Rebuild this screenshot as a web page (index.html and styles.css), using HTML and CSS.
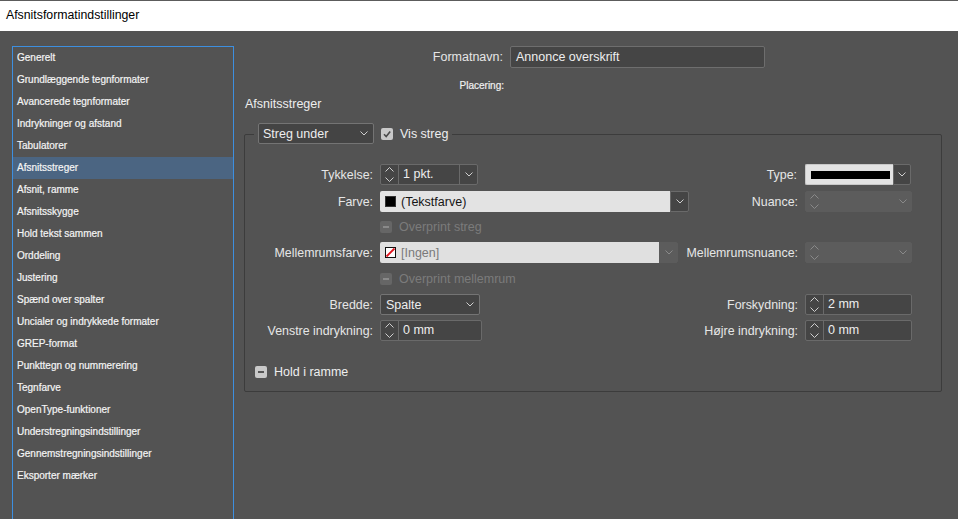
FILE: index.html
```html
<!DOCTYPE html>
<html lang="da">
<head>
<meta charset="utf-8">
<title>Afsnitsformatindstillinger</title>
<link rel="stylesheet" href="styles.css">
</head>
<body>
<header class="titlebar">Afsnitsformatindstillinger</header>
<div class="dialog">
  <nav class="sidebar">
    <ul class="nav">
      <li>Generelt</li>
      <li>Grundlæggende tegnformater</li>
      <li>Avancerede tegnformater</li>
      <li>Indrykninger og afstand</li>
      <li>Tabulatorer</li>
      <li class="active">Afsnitsstreger</li>
      <li>Afsnit, ramme</li>
      <li>Afsnitsskygge</li>
      <li>Hold tekst sammen</li>
      <li>Orddeling</li>
      <li>Justering</li>
      <li>Spænd over spalter</li>
      <li>Uncialer og indrykkede formater</li>
      <li>GREP-format</li>
      <li>Punkttegn og nummerering</li>
      <li>Tegnfarve</li>
      <li>OpenType-funktioner</li>
      <li>Understregningsindstillinger</li>
      <li>Gennemstregningsindstillinger</li>
      <li>Eksporter mærker</li>
    </ul>
  </nav>
  <main class="panel">
    <div class="name-row">
      <span class="name-label">Formatnavn:</span>
      <div class="name-input">Annonce overskrift</div>
    </div>
    <div class="place-row"><span class="place-label">Placering:</span></div>
    <h2 class="section">Afsnitsstreger</h2>

    <section class="group">
      <div class="legend">
        <div class="select w-streg"><span class="sel-val">Streg under</span><svg class="chev" width="8" height="5" viewBox="0 0 8 5"><path d="M.5 .5 4 4 7.5 .5"/></svg></div>
        <svg class="cb" width="12" height="12" viewBox="0 0 12 12"><rect class="cb-on" width="12" height="12" rx="2"/><path class="tick" d="M3 6.2 5.2 8.5 9.2 3.5"/></svg>
        <span class="cb-text">Vis streg</span>
      </div>

      <div class="row r1">
        <span class="lbl">Tykkelse:</span>
        <div class="spin w-tyk">
          <span class="step"><svg class="updown" width="9" height="15" viewBox="0 0 9 15"><path d="M.5 4.5 4.5 .5 8.5 4.5M.5 10.5 4.5 14.5 8.5 10.5"/></svg></span>
          <span class="val">1 pkt.</span>
          <span class="dd"><svg class="chev" width="8" height="5" viewBox="0 0 8 5"><path d="M.5 .5 4 4 7.5 .5"/></svg></span>
        </div>
        <div class="right">
          <span class="rlbl">Type:</span>
          <div class="combo type">
            <span class="field"><span class="line"></span></span>
            <span class="cdd"><svg class="chev" width="8" height="5" viewBox="0 0 8 5"><path d="M.5 .5 4 4 7.5 .5"/></svg></span>
          </div>
        </div>
      </div>

      <div class="row r2">
        <span class="lbl">Farve:</span>
        <div class="combo w-farve">
          <span class="field"><span class="sw-black"></span>(Tekstfarve)</span>
          <span class="cdd"><svg class="chev" width="8" height="5" viewBox="0 0 8 5"><path d="M.5 .5 4 4 7.5 .5"/></svg></span>
        </div>
        <div class="right">
          <span class="rlbl">Nuance:</span>
          <div class="spin off w-r">
            <span class="step"><svg class="updown" width="9" height="15" viewBox="0 0 9 15"><path d="M.5 4.5 4.5 .5 8.5 4.5M.5 10.5 4.5 14.5 8.5 10.5"/></svg></span>
            <span class="val"></span>
            <span class="dd"><svg class="chev" width="8" height="5" viewBox="0 0 8 5"><path d="M.5 .5 4 4 7.5 .5"/></svg></span>
          </div>
        </div>
      </div>

      <div class="row r3 indent">
        <svg class="cb" width="12" height="12" viewBox="0 0 12 12"><rect class="cb-off" width="12" height="12" rx="2"/><rect class="dash-off" x="3" y="5" width="6" height="2"/></svg>
        <span class="cb-text dim">Overprint streg</span>
      </div>

      <div class="row r4">
        <span class="lbl">Mellemrumsfarve:</span>
        <div class="combo w-mellem">
          <span class="field dis"><svg class="sw-none" width="11" height="11" viewBox="0 0 11 11"><rect x=".5" y=".5" width="10" height="10" fill="#fff" stroke="#111"/><path d="M1.5 9.5 9.5 1.5" stroke="#e0141e" stroke-width="1.8"/></svg>[Ingen]</span>
          <span class="cdd off"><svg class="chev" width="8" height="5" viewBox="0 0 8 5"><path d="M.5 .5 4 4 7.5 .5"/></svg></span>
        </div>
        <div class="right">
          <span class="rlbl">Mellemrumsnuance:</span>
          <div class="spin off w-r">
            <span class="step"><svg class="updown" width="9" height="15" viewBox="0 0 9 15"><path d="M.5 4.5 4.5 .5 8.5 4.5M.5 10.5 4.5 14.5 8.5 10.5"/></svg></span>
            <span class="val"></span>
            <span class="dd"><svg class="chev" width="8" height="5" viewBox="0 0 8 5"><path d="M.5 .5 4 4 7.5 .5"/></svg></span>
          </div>
        </div>
      </div>

      <div class="row r5 indent">
        <svg class="cb" width="12" height="12" viewBox="0 0 12 12"><rect class="cb-off" width="12" height="12" rx="2"/><rect class="dash-off" x="3" y="5" width="6" height="2"/></svg>
        <span class="cb-text dim">Overprint mellemrum</span>
      </div>

      <div class="row r6">
        <span class="lbl">Bredde:</span>
        <div class="select w-bredde"><span class="sel-val">Spalte</span><svg class="chev" width="8" height="5" viewBox="0 0 8 5"><path d="M.5 .5 4 4 7.5 .5"/></svg></div>
        <div class="right">
          <span class="rlbl">Forskydning:</span>
          <div class="spin w-r">
            <span class="step"><svg class="updown" width="9" height="15" viewBox="0 0 9 15"><path d="M.5 4.5 4.5 .5 8.5 4.5M.5 10.5 4.5 14.5 8.5 10.5"/></svg></span>
            <span class="val">2 mm</span>
          </div>
        </div>
      </div>

      <div class="row r7">
        <span class="lbl">Venstre indrykning:</span>
        <div class="spin w-venstre">
          <span class="step"><svg class="updown" width="9" height="15" viewBox="0 0 9 15"><path d="M.5 4.5 4.5 .5 8.5 4.5M.5 10.5 4.5 14.5 8.5 10.5"/></svg></span>
          <span class="val">0 mm</span>
        </div>
        <div class="right">
          <span class="rlbl">Højre indrykning:</span>
          <div class="spin w-r">
            <span class="step"><svg class="updown" width="9" height="15" viewBox="0 0 9 15"><path d="M.5 4.5 4.5 .5 8.5 4.5M.5 10.5 4.5 14.5 8.5 10.5"/></svg></span>
            <span class="val">0 mm</span>
          </div>
        </div>
      </div>

      <div class="row r8 hold">
        <svg class="cb" width="12" height="12" viewBox="0 0 12 12"><rect class="cb-on" width="12" height="12" rx="2"/><rect class="dash-on" x="3" y="5" width="6" height="2"/></svg>
        <span class="cb-text">Hold i ramme</span>
      </div>
    </section>
  </main>
</div>
</body>
</html>
```

FILE: styles.css
```css
* { box-sizing: border-box; }
html, body { margin: 0; height: 100%; overflow: hidden; }
body {
  background: #535353;
  font-family: "Liberation Sans", Arial, sans-serif;
  color: #e6e6e6;
}

.titlebar {
  height: 31px;
  background: #fff;
  border-top: 1px solid #5c5c5c;
  padding-left: 6px;
  font-size: 12.3px;
  line-height: 29px;
  color: #000;
}

.dialog { display: flex; height: 488px; }

.sidebar {
  flex: none;
  width: 222px;
  margin: 15px 0 0 12px;
  border: 1px solid #3d8fe0;
  border-bottom: 0;
}
.nav { list-style: none; margin: 0; padding: 0; }
.nav li {
  height: 22px;
  line-height: 22px;
  padding-left: 4px;
  font-size: 10px;
  color: #f4f4f4;
  white-space: nowrap;
  -webkit-text-stroke: 0.2px #f4f4f4;
}
.nav li.active { background: #4b6582; }

.panel { flex: 1; padding: 15px 16px 0 10px; }

.name-row { display: flex; align-items: center; height: 22px; }
.name-label { width: 259px; text-align: right; margin-right: 7px; font-size: 12.5px; }
.name-input {
  width: 255px;
  height: 22px;
  background: #454545;
  border: 1px solid #6e6e6e;
  border-radius: 2px;
  padding-left: 5px;
  font-size: 12.5px;
  line-height: 20px;
  color: #eee;
}

.place-row { margin-top: 9px; height: 14px; line-height: 14px; }
.place-label {
  display: inline-block;
  width: 260px;
  text-align: right;
  font-size: 10px;
  color: #f0f0f0;
  -webkit-text-stroke: 0.2px #f0f0f0;
}

.section {
  margin: 5px 0 0 1px;
  height: 16px;
  line-height: 16px;
  font-size: 12.5px;
  font-weight: normal;
  color: #eee;
}

.group {
  margin-top: 22px;
  border: 1px solid #3c3c3c;
  border-radius: 2px;
  padding: 0 29px 9px 0;
}

.legend {
  display: flex;
  align-items: center;
  width: max-content;
  height: 21px;
  margin: -12px 0 0 9px;
  padding: 0 4px;
  background: #535353;
}

.select {
  display: flex;
  align-items: center;
  height: 21px;
  background: #444;
  border: 1px solid #747474;
  border-radius: 2px;
  padding: 0 5px 0 4px;
  font-size: 12.5px;
  color: #eee;
}
.sel-val { flex: 1; }
.w-streg { width: 116px; margin-right: 7px; }
.w-bredde { width: 100px; padding-left: 5px; }

.chev path, .updown path { fill: none; stroke: #cfcfcf; stroke-width: 1; }

.cb { flex: none; display: block; }
.cb-on { fill: #c9c9c9; }
.cb-off { fill: #666; }
.tick { fill: none; stroke: #4a4a4a; stroke-width: 1.6; }
.dash-on { fill: #555; }
.dash-off { fill: #8a8a8a; }
.cb-text { margin-left: 7px; font-size: 12.5px; color: #eee; }
.cb-text.dim { color: #7b7b7b; }

.row { display: flex; align-items: center; height: 21px; }
.r1 { margin-top: 20px; }
.r2 { margin-top: 6px; }
.r3 { margin-top: 4px; }
.r4, .r5, .r6, .r7 { margin-top: 5px; }
.r8 { margin-top: 20px; }
.indent { padding-left: 135px; }
.hold { padding-left: 10px; }

.lbl {
  flex: none;
  width: 128px;
  margin-right: 7px;
  text-align: right;
  font-size: 12.4px;
  white-space: nowrap;
}
.right { margin-left: auto; display: flex; align-items: center; }
.rlbl { margin-right: 7px; font-size: 12.4px; white-space: nowrap; }

.spin {
  display: flex;
  height: 21px;
  background: #454545;
  border: 1px solid #6a6a6a;
  border-radius: 2px;
  font-size: 12.5px;
  color: #eee;
}
.spin .step {
  flex: none;
  width: 18px;
  border-right: 1px solid #6a6a6a;
  display: flex;
  align-items: center;
  justify-content: center;
}
.spin .val { flex: 1; padding-left: 4px; line-height: 19px; }
.spin .dd {
  flex: none;
  width: 18px;
  border-left: 1px solid #6a6a6a;
  display: flex;
  align-items: center;
  justify-content: center;
}
.spin.off { background: #5c5c5c; border-color: #5c5c5c; }
.spin.off .step, .spin.off .dd { border-color: #5c5c5c; }
.spin.off path { stroke: #8a8a8a; }

.w-tyk { width: 98px; }
.w-venstre { width: 102px; }
.w-r { width: 107px; }

.combo { display: flex; height: 21px; }
.combo .field {
  flex: 1;
  display: flex;
  align-items: center;
  background: #e3e3e3;
  border-radius: 2px 0 0 2px;
  padding-left: 5px;
  font-size: 12.5px;
  color: #151515;
}
.combo .field.dis { background: #e0e0e0; color: #7a7a7a; }
.combo .cdd {
  flex: none;
  width: 19px;
  background: #454545;
  border: 1px solid #6a6a6a;
  border-radius: 0 2px 2px 0;
  display: flex;
  align-items: center;
  justify-content: center;
}
.combo .cdd.off { background: #5c5c5c; border-color: #5c5c5c; }
.combo .cdd.off path { stroke: #8a8a8a; }

.w-farve { width: 309px; }
.w-mellem { width: 298px; }
.type { width: 106px; margin-right: 1px; margin-left: 1px; }
.type .field { padding: 0 3px 0 5px; border: 1px solid #c8c8c8; border-right: 0; }
.type .cdd { width: 18px; }
.line { display: block; flex: 1; height: 8px; background: #000; }

.sw-black {
  flex: none;
  width: 11px;
  height: 11px;
  background: #000;
  border: 1px solid #333;
  margin-right: 5px;
}
.sw-none { flex: none; display: block; margin-right: 5px; }
```
